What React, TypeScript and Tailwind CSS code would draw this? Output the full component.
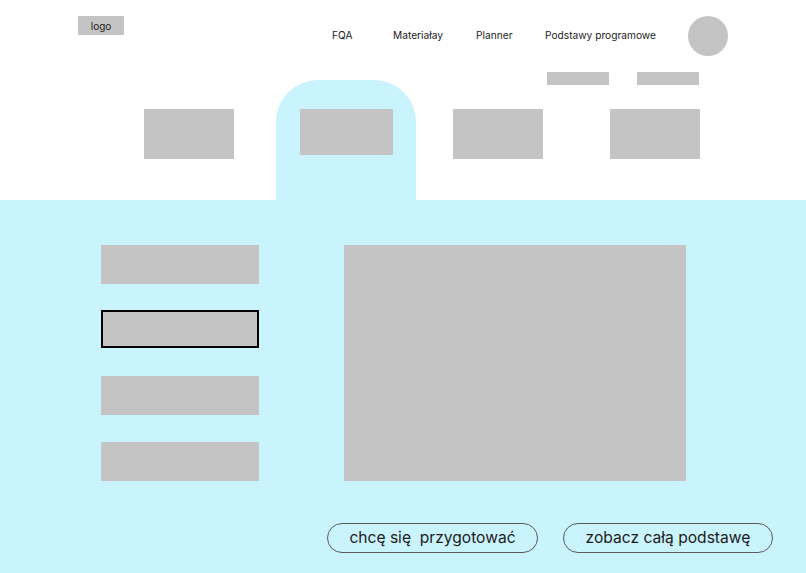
import React from "react";

const navItems = [
  { label: "FQA", w: "w-[61px]" },
  { label: "Materiałay", w: "w-[83px]" },
  { label: "Planner", w: "w-[69px]" },
  { label: "Podstawy programowe", w: "w-[143px]" },
];

const App: React.FC = () => {
  return (
    <div className="w-[806px] h-[573px] overflow-hidden bg-white text-[#1c1c1c] font-['Inter','Liberation_Sans',sans-serif]">
      {/* header */}
      <div className="h-[200px] flex flex-col">
        <div className="flex items-center h-[40px] mt-[16px]">
          <div className="self-start ml-[78px] w-[46px] h-[19px] bg-[#c4c4c4] flex items-center justify-center text-[10px] leading-none">
            logo
          </div>
          <nav className="flex items-center ml-[208px] text-[10.2px]">
            {navItems.map((item) => (
              <span key={item.label} className={`${item.w} whitespace-nowrap`}>
                {item.label}
              </span>
            ))}
          </nav>
          <div className="w-[40px] h-[40px] rounded-full bg-[#c4c4c4]" />
        </div>

        <div className="flex h-[8px] mt-[16px]">
          <div className="ml-[547px] w-[62px] h-[13px] bg-[#c4c4c4]" />
          <div className="ml-[28px] w-[62px] h-[13px] bg-[#c4c4c4]" />
        </div>

        <div className="flex items-start flex-1">
          <div className="ml-[144px] mt-[29px] w-[90px] h-[50px] bg-[#c4c4c4]" />
          <div className="ml-[42px] w-[140px] h-full rounded-t-[42px] bg-[#c9f3fd] pt-[29px] pl-[24px]">
            <div className="w-[93px] h-[46px] bg-[#c4c4c4]" />
          </div>
          <div className="ml-[37px] mt-[29px] w-[90px] h-[50px] bg-[#c4c4c4]" />
          <div className="ml-[67px] mt-[29px] w-[90px] h-[50px] bg-[#c4c4c4]" />
        </div>
      </div>

      {/* content */}
      <div className="h-[373px] bg-[#c9f3fd] pt-[45px]">
        <div className="flex items-start">
          <div className="ml-[101px] flex flex-col w-[158px]">
            <div className="h-[39px] bg-[#c4c4c4]" />
            <div className="mt-[26px] h-[38px] bg-[#c4c4c4] border-2 border-black" />
            <div className="mt-[28px] h-[39px] bg-[#c4c4c4]" />
            <div className="mt-[27px] h-[39px] bg-[#c4c4c4]" />
          </div>
          <div className="ml-[85px] w-[342px] h-[236px] bg-[#c4c4c4]" />
        </div>

        <div className="flex mt-[42px]">
          <button className="ml-[327px] w-[211px] h-[30px] rounded-full border border-[#5a5a5a] text-[15.6px] leading-none whitespace-pre flex items-center justify-center">
            {"chcę się  przygotować"}
          </button>
          <button className="ml-[25px] w-[210px] h-[30px] rounded-full border border-[#5a5a5a] text-[15.6px] leading-none flex items-center justify-center">
            zobacz całą podstawę
          </button>
        </div>
      </div>
    </div>
  );
};

export default App;
